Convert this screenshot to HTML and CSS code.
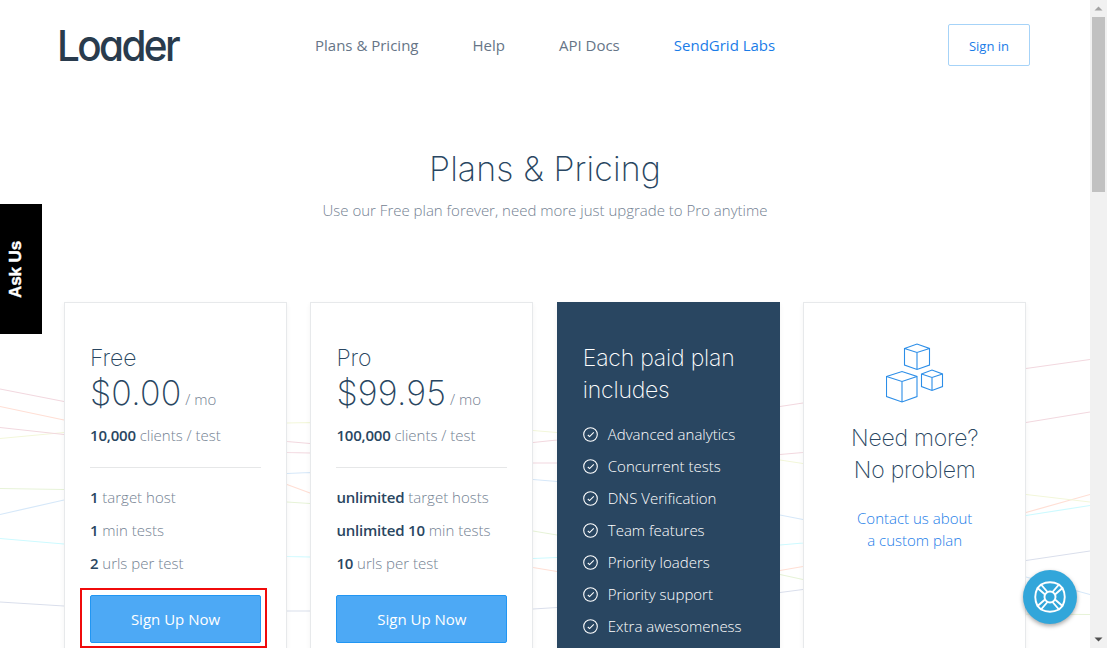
FILE: index.html
```html
<!DOCTYPE html>
<html lang="en">
<head>
<meta charset="utf-8">
<title>Loader - Plans &amp; Pricing</title>
<link rel="stylesheet" href="styles.css">
</head>
<body>
<svg width="0" height="0" class="defs" aria-hidden="true">
  <symbol id="check" viewBox="0 0 16 16"><circle cx="7.500" cy="8.500" r="6.800"/><path d="M4.800 9l1.800 1.600 4.200-4.300"/></symbol>
</svg>
<div class="window">
  <div class="page">
    <svg class="waves" width="1090" height="648" viewBox="0 0 1090 648" aria-hidden="true">
      <polyline class="pink" points="0,389 64,401.5 287,441.5 310,443.5 420,450 533,442.5 557,440 780,406.5 803,403 1026,368.5 1090,359.5"/>
      <polyline class="orange" points="0,406.5 64,420 287,484.5 310,493 533,567.5 557,571.5 670,580 780,570.5 803,566.5 1026,512.5 1090,494.5"/>
      <polyline class="yellow" points="0,438.5 64,432.5 287,423 310,422.5 533,430.5 557,432.5 780,460 803,463.5 1026,494.5 1090,502"/>
      <polyline class="pink" points="0,427.5 64,434.5 287,452.5 310,453 533,463 557,463 780,454.5 803,452.5 1026,422.5 1090,412"/>
      <polyline class="green" points="0,488.5 64,489.5 287,502 310,503.5 533,531 557,535 780,574.5 803,579.5 1026,614 1090,614.5"/>
      <polyline class="blue" points="0,514.5 64,500 287,473.5 310,472.5 533,479.5 557,481.5 780,515 803,519.5 1026,577 1090,594.5"/>
      <polyline class="cyan" points="0,538.5 64,544 287,556.5 310,557 533,558.5 557,557.5 780,545 803,543 1026,515.5 1090,505.5"/>
      <polyline class="indigo" points="0,602 64,606 287,611 310,611 533,609 557,607.5 780,592.5 803,589.5 1026,560.5 1090,551"/>
    </svg>

    <header class="header">
      <a class="logo"><svg width="130" height="44"><text x="-1" y="37" textLength="121" lengthAdjust="spacingAndGlyphs">Loader</text></svg></a>
      <nav class="nav">
        <a>Plans &amp; Pricing</a>
        <a>Help</a>
        <a>API Docs</a>
        <a class="active">SendGrid Labs</a>
      </nav>
      <a class="signin">Sign in</a>
    </header>

    <section class="intro">
      <h1>Plans &amp; Pricing</h1>
      <p>Use our Free plan forever, need more just upgrade to Pro anytime</p>
    </section>

    <main class="plans">
      <section class="card">
        <h2>Free</h2>
        <div class="price"><span class="amount free">$0.00</span> <span class="per">/ mo</span></div>
        <p class="clients"><b>10,000</b> clients / test</p>
        <ul class="limits">
          <li><b>1</b> target host</li>
          <li><b>1</b> min tests</li>
          <li><b>2</b> urls per test</li>
        </ul>
        <div class="action"><a class="signup">Sign Up Now</a><span class="highlight"></span></div>
      </section>
      <section class="card">
        <h2>Pro</h2>
        <div class="price"><span class="amount pro">$99.95</span> <span class="per">/ mo</span></div>
        <p class="clients"><b>100,000</b> clients / test</p>
        <ul class="limits">
          <li><b>unlimited</b> target hosts</li>
          <li><b>unlimited 10</b> min tests</li>
          <li><b>10</b> urls per test</li>
        </ul>
        <div class="action"><a class="signup">Sign Up Now</a></div>
      </section>
      <section class="card dark">
        <h2>Each paid plan<br>includes</h2>
        <ul class="features">
          <li><svg><use href="#check"/></svg>Advanced analytics</li>
          <li><svg><use href="#check"/></svg>Concurrent tests</li>
          <li><svg><use href="#check"/></svg>DNS Verification</li>
          <li><svg><use href="#check"/></svg>Team features</li>
          <li><svg><use href="#check"/></svg>Priority loaders</li>
          <li><svg><use href="#check"/></svg>Priority support</li>
          <li><svg><use href="#check"/></svg>Extra awesomeness</li>
        </ul>
      </section>
      <section class="card custom">
        <svg class="cubes" width="58" height="60" viewBox="0 0 58 60">
          <path d="M18.500 5.500L31 1l12.500 4.500v16.500L31 26.500 18.500 22zM18.500 5.500L31 9.500l12.500-4M31 9.500v17"/>
          <path d="M.5 33.500L16 28.500l15 5v20L16 59 .5 53.500zM.5 33.500L16 38.500l15-5M16 38.500V59"/>
          <path d="M35.500 31L46 27l10.500 4v12.500L46 47.500 35.500 43.500zM35.500 31L46 34.500 56.500 31M46 34.500v13"/>
        </svg>
        <h2>Need more?<br>No problem</h2>
        <a class="contact">Contact us about<br>a custom plan</a>
      </section>
    </main>

    <a class="ask">Ask Us</a>
    <a class="help">
      <svg width="32" height="32" viewBox="0 0 32 32">
        <circle cx="16" cy="16" r="5.500"/>
        <path d="M7 3.500Q16-1 25 3.500L28.500 7Q33 16 28.500 25L25 28.500Q16 33 7 28.500L3.500 25Q-1 16 3.500 7Z"/>
        <path d="M7 3.500l6.500 7.500M3.500 7l7.500 6.500M25 3.500l-6.500 7.500M28.500 7l-7.500 6.500M7 28.500l6.500-7.500M3.500 25l7.500-6.500M25 28.500l-6.500-7.500M28.500 25l-7.500-6.500"/>
      </svg>
    </a>
  </div>
  <div class="scrollbar">
    <svg width="17" height="17"><path class="dim" d="M4.500 10.500h8l-4-4z"/></svg>
    <div class="thumb"></div>
    <svg class="down" width="17" height="17"><path d="M4.500 6.500h8l-4 4z"/></svg>
  </div>
</div>
</body>
</html>
```
FILE: styles.css
```css
* { box-sizing: border-box; }
body { margin: 0; overflow: hidden; background: #fff; font-family: "Open Sans", sans-serif; font-size: 15px; font-weight: 300; color: #738192; }
h1, h2, p, ul { margin: 0; padding: 0; font-weight: 300; }
ul { list-style: none; }
.defs { position: absolute; }
.window { display: flex; width: 1107px; height: 648px; overflow: hidden; }
.page { position: relative; width: 1090px; height: 648px; overflow: hidden; }
.waves { position: absolute; inset: 0; fill: none; stroke-width: 1.2; }
.pink { stroke: #f2d8df; }
.orange { stroke: #ffdfd5; }
.yellow { stroke: #f3f7da; }
.green { stroke: #e7f3d8; }
.blue { stroke: #d6e8f9; }
.cyan { stroke: #cdfaff; }
.indigo { stroke: #dadfec; }

.header { position: relative; display: flex; align-items: flex-start; height: 144px; padding: 24px 60px 0 58px; }
.logo { width: 257px; }
.logo svg { display: block; overflow: visible; }
.logo text { font: 500 43px Inter, sans-serif; font-feature-settings: "cv11" 1; letter-spacing: -2.8px; fill: #293b4d; }
.nav { display: flex; gap: 54px; line-height: 22px; padding-top: 10px; font-weight: 400; color: #667587; }
.nav .active { color: #1a7ce8; }
.signin { width: 82px; height: 42px; margin-left: auto; border: 1px solid #a6d3f8; border-radius: 2px; font-size: 13px; line-height: 43px; font-weight: 400; text-align: center; color: #1a7ce8; }

.intro { position: relative; height: 158px; text-align: center; }
.intro h1 { font: 200 34px/50px Inter, sans-serif; letter-spacing: .1px; color: #294661; }
.intro p { margin-top: 5px; line-height: 22px; }

.plans { position: relative; display: grid; grid-template-columns: repeat(4, 223px); column-gap: 23.4px; padding-left: 64px; }
.card { height: 420px; padding: 39px 25px 0; background: #fff; border: 1px solid #e7e9eb; box-shadow: 0 2px 5px rgba(0, 0, 0, .05); }
.card h2 { font: 200 23px/32px Inter, sans-serif; color: #294661; white-space: nowrap; }
.price { height: 38px; line-height: 38px; white-space: nowrap; }
.amount { font: 200 34px/38px Inter, sans-serif; letter-spacing: .2px; color: #294661; }
.clients { height: 56px; padding-top: 12px; line-height: 22px; border-bottom: 1px solid #e6e7e8; }
b { font-weight: 600; letter-spacing: -.2px; color: #294661; }
.limits { padding-top: 13px; }
.limits li { height: 33px; line-height: 33px; white-space: nowrap; }
.action { position: relative; margin-top: 15px; }
.signup { display: block; height: 48px; border: 1px solid #2196f3; border-radius: 2px; background: #4da9f5; color: #fff; font-weight: 400; line-height: 47px; text-align: center; }
.highlight { position: absolute; left: -10px; top: -7px; width: 187px; height: 60px; border: 2px solid #f00b0b; }
.card.dark { background: #294661; border-color: #294661; color: #fff; }
.card.dark h2 { font-weight: 250; letter-spacing: -.2px; color: #fff; }
.features { padding-top: 12px; }
.features li { display: flex; align-items: center; gap: 9px; height: 32px; font-weight: 300; white-space: nowrap; }
.features svg { width: 16px; height: 16px; fill: none; stroke: #fff; stroke-width: 1.100; }
.custom { text-align: center; }
.card.custom h2 { letter-spacing: -.25px; }
.cubes { display: block; margin: 1px auto 19px; fill: none; stroke: #2c8ee8; stroke-width: 1.100; }
.contact { display: block; margin-top: 21px; line-height: 22px; color: #1a7ce8; }

.ask { position: absolute; left: 0; top: 204px; width: 42px; height: 130px; background: #000; color: #fff; font: 700 17px/32px "Liberation Sans", sans-serif; -webkit-text-stroke: .4px #fff; letter-spacing: -.1px; writing-mode: vertical-rl; transform: rotate(180deg); text-align: center; padding-left: 9px; }
.help { position: absolute; left: 1023px; top: 570px; display: grid; place-items: center; width: 54px; height: 54px; border-radius: 50%; background: #32a6da; box-shadow: 0 2px 4px rgba(0, 0, 0, .35); }
.help svg { fill: none; stroke: #fff; stroke-width: 1.900; }
.scrollbar { display: flex; flex-direction: column; width: 17px; background: #f1f1f1; }
.scrollbar path { fill: #505050; }
.scrollbar .dim { fill: #a3a3a3; }
.thumb { width: 13px; height: 175px; margin-left: 2px; background: #c1c1c1; }
.down { margin-top: auto; }
```
